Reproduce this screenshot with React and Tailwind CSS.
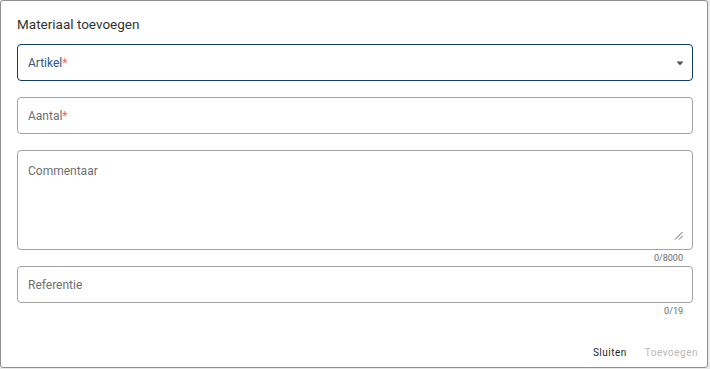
const font = { fontFamily: 'Roboto, "Liberation Sans", sans-serif' }

function Field({ label, required, active, select, textarea, counter }) {
  return (
    <div>
      <div
        className={
          'relative flex rounded-[4px] border bg-white ' +
          (active ? 'border-[#0f3d63] ' : 'border-[#a3a3a3] ') +
          (textarea ? 'h-[100px] items-start pt-[11px]' : 'h-[37px] items-center')
        }
      >
        <span className={'pl-[10px] text-[12px] ' + (active ? 'text-[#2e5884]' : 'text-[#6f6f6f]')}>
          {label}
          {required && <span className="text-[#f06a4f]">*</span>}
        </span>
        {select && (
          <svg className="absolute right-[8px] top-[16px]" width="8" height="5" viewBox="0 0 8 5">
            <path d="M0.5 0.5 L7.5 0.5 L4 4.5 Z" fill="#4a5560" />
          </svg>
        )}
        {textarea && (
          <svg className="absolute right-[9px] bottom-[9px]" width="9" height="9" viewBox="0 0 9 9">
            <path d="M8.5 1 L1 8.5 M8.5 5 L5 8.5" stroke="#555" strokeWidth="0.9" />
          </svg>
        )}
      </div>
      {counter && (
        <div className="flex justify-end pr-[10px] pt-[1px] text-[9px] leading-[14px] text-[#6b6b6b]">{counter}</div>
      )}
    </div>
  )
}

export default function App() {
  return (
    <div className="h-[369px] w-[710px] bg-[#e9e9e9]" style={font}>
      <div className="flex h-[368px] w-[708px] flex-col rounded-[3px] border border-[#8f8f8f] bg-white pl-[16px] pr-[14px]">
        <h2 className="pt-[14px] pb-[11px] text-[13.5px] leading-[18px] text-[#333333]">Materiaal toevoegen</h2>

        <div className="flex flex-col">
          <Field label="Artikel" required active select />
          <div className="h-[16px]" />
          <Field label="Aantal" required />
          <div className="h-[16px]" />
          <Field label="Commentaar" textarea counter="0/8000" />
          <div className="h-[1px]" />
          <Field label="Referentie" counter="0/19" />
        </div>

        <div className="-mr-[5px] mt-auto flex justify-end gap-[18px] pb-[7px] text-[10px] tracking-[0.05em]">
          <button className="text-[#1f1f1f]">Sluiten</button>
          <button className="text-[#b9b9b9]">Toevoegen</button>
        </div>
      </div>
    </div>
  )
}
